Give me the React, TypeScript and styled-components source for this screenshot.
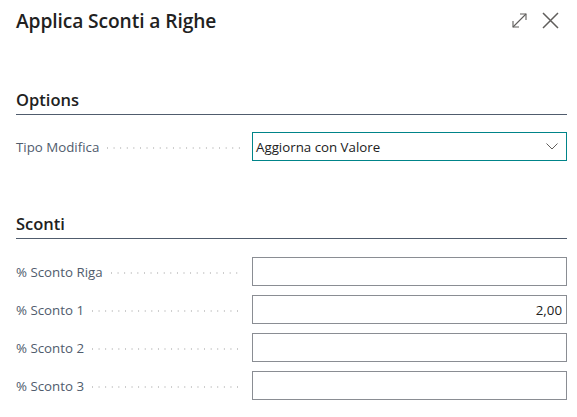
import React from "react";
import styled, { createGlobalStyle } from "styled-components";

const Global = createGlobalStyle`
  html, body { margin: 0; padding: 0; background: #ffffff; }
  body { font-family: "Open Sans", "Noto Sans", sans-serif; }
  * { box-sizing: border-box; }
`;

const Dialog = styled.div`
  width: 577px;
  height: 417px;
  padding: 0 10px 0 16px;
  background: #ffffff;
  overflow: hidden;
`;

const Header = styled.div`
  height: 40px;
  display: flex;
  align-items: center;
  justify-content: space-between;
  padding-right: 8px;
`;

const Title = styled.h1`
  margin: 0;
  font-size: 19.2px;
  font-weight: 600;
  color: #212121;
  letter-spacing: -0.1px;
`;

const Actions = styled.div`
  display: flex;
  align-items: center;
  gap: 14px;
`;

const IconButton = styled.button`
  border: none;
  background: none;
  padding: 0;
  width: 17px;
  height: 17px;
  display: flex;
  align-items: center;
  justify-content: center;
  color: #605e5c;
  cursor: pointer;
`;

const Section = styled.section<{ $top: number }>`
  margin-top: ${(p) => p.$top}px;
`;

const SectionTitle = styled.h2`
  margin: 0;
  font-size: 16.5px;
  font-weight: 600;
  line-height: 24px;
  color: #212121;
  padding-bottom: 2px;
  border-bottom: 1px solid #505c6d;
`;

const Fields = styled.div<{ $pad: number }>`
  display: flex;
  flex-direction: column;
  gap: 9px;
  padding-top: ${(p) => p.$pad}px;
`;

const Row = styled.div`
  display: grid;
  grid-template-columns: 236px 1fr;
  height: 29px;
  align-items: center;
`;

const Label = styled.label`
  display: flex;
  align-items: center;
  font-size: 13.3px;
  color: #505c6d;
  padding-right: 12px;
  white-space: nowrap;
`;

const Leader = styled.span`
  flex: 1;
  height: 1.5px;
  margin-left: 8px;
  margin-top: 3px;
  background-image: linear-gradient(to right, #c9c9c9 1.3px, transparent 1.3px);
  background-size: 6.6px 1.5px;
  background-repeat: repeat-x;
`;

const Input = styled.div<{ $align?: "left" | "right"; $focused?: boolean }>`
  height: 29px;
  border: 1px solid ${(p) => (p.$focused ? "#008489" : "#8a8d93")};
  display: flex;
  align-items: center;
  justify-content: ${(p) => (p.$align === "right" ? "flex-end" : "space-between")};
  padding: 0 4px 0 3px;
  font-size: 13.3px;
  color: #212121;
  background: #ffffff;
`;

const Chevron = styled.span`
  display: flex;
  margin-right: 4px;
`;

const ExpandIcon = () => (
  <svg width="17" height="17" viewBox="0 0 17 17" fill="none" stroke="currentColor" strokeWidth="1.1">
    <path d="M2 15 L15 2" />
    <path d="M9 2 H15 V8" />
    <path d="M2 9 V15 H8" />
  </svg>
);

const CloseIcon = () => (
  <svg width="17" height="17" viewBox="0 0 17 17" fill="none" stroke="currentColor" strokeWidth="1.5">
    <path d="M1 1 L16 16 M16 1 L1 16" />
  </svg>
);

const ChevronDown = () => (
  <svg width="12" height="7" viewBox="0 0 12 7" fill="none" stroke="#605e5c" strokeWidth="1">
    <path d="M0.5 0.5 L6 6 L11.5 0.5" />
  </svg>
);

type Field = { label: string; value?: string };

const sconti: Field[] = [
  { label: "% Sconto Riga" },
  { label: "% Sconto 1", value: "2,00" },
  { label: "% Sconto 2" },
  { label: "% Sconto 3" },
];

export default function App() {
  return (
    <>
      <Global />
      <Dialog>
        <Header>
          <Title>Applica Sconti a Righe</Title>
          <Actions>
            <IconButton aria-label="Espandi">
              <ExpandIcon />
            </IconButton>
            <IconButton aria-label="Chiudi">
              <CloseIcon />
            </IconButton>
          </Actions>
        </Header>

        <Section $top={48}>
          <SectionTitle>Options</SectionTitle>
          <Fields $pad={17}>
            <Row>
              <Label>
                Tipo Modifica
                <Leader />
              </Label>
              <Input $focused>
                <span>Aggiorna con Valore</span>
                <Chevron>
                  <ChevronDown />
                </Chevron>
              </Input>
            </Row>
          </Fields>
        </Section>

        <Section $top={51}>
          <SectionTitle>Sconti</SectionTitle>
          <Fields $pad={18}>
            {sconti.map((f) => (
              <Row key={f.label}>
                <Label>
                  {f.label}
                  <Leader />
                </Label>
                <Input $align="right">{f.value}</Input>
              </Row>
            ))}
          </Fields>
        </Section>
      </Dialog>
    </>
  );
}
